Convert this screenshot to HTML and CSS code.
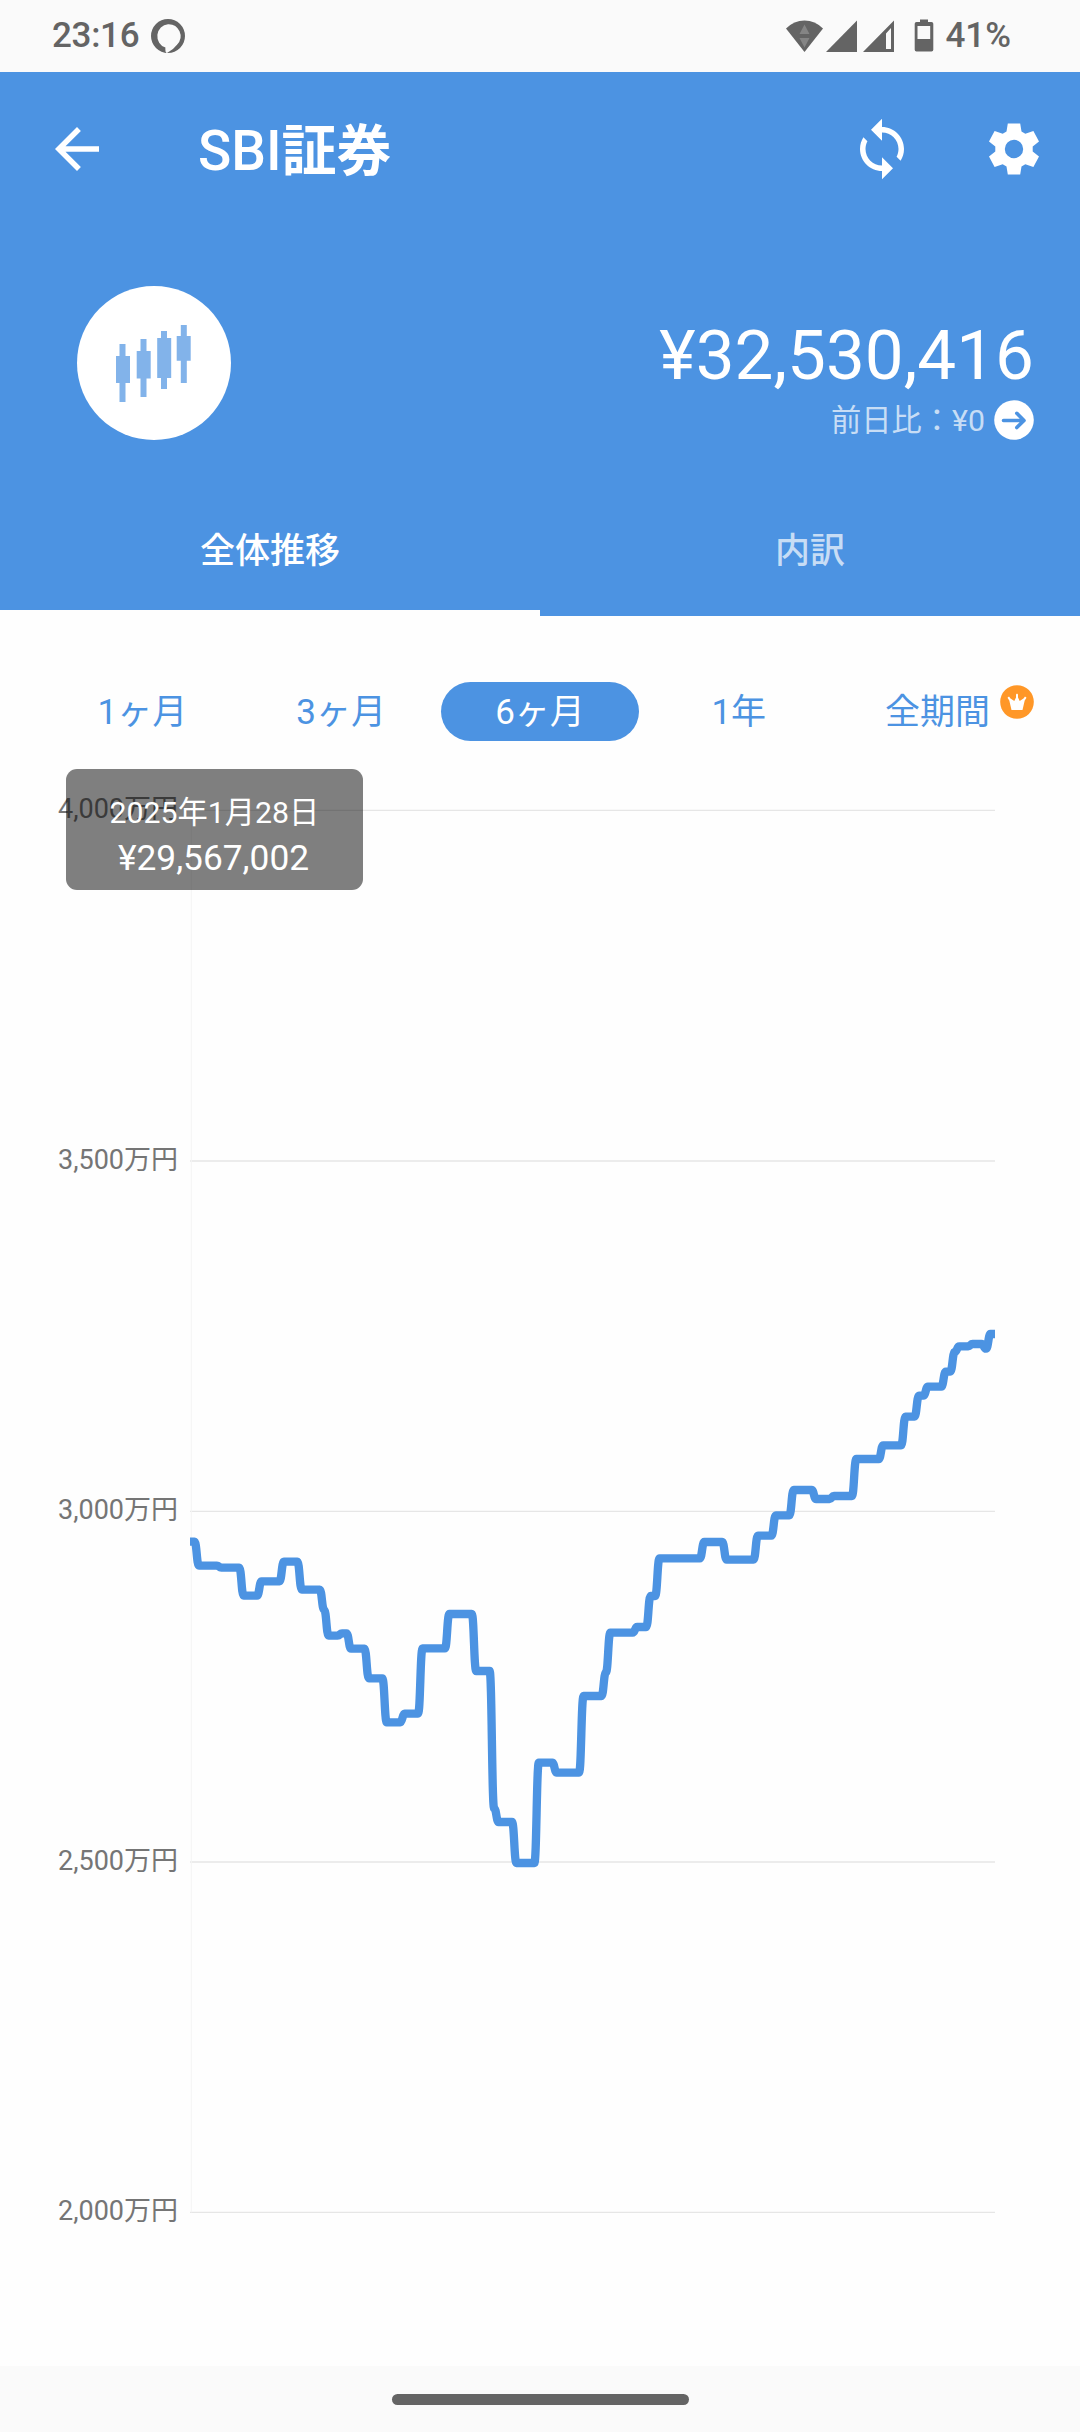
FILE: index.html
```html
<!DOCTYPE html>
<html lang="ja">
<head>
    <meta charset="UTF-8">
    <meta name="viewport" content="width=device-width, initial-scale=1.0">
    <title>SBI証券</title>
    <link rel="stylesheet" href="styles.css">
</head>
<body>
    <div class="status-bar">
        <span class="clock">23:16</span>
        <svg class="ring-icon" width="34" height="34" viewBox="0 0 34 34">
            <path fill-rule="evenodd" d="M17 0a17 17 0 1 1 0 34a17 17 0 1 1 0-34zM17 5.2a11.6 12 0 0 0-2.600 23.400l.6 4.800l1 .6q6.500-3.500 10-8.300A12 12 0 0 0 17 5.200z"/>
            <path class="ring-gap" d="M14.600 29.200L14.600 33L22 27.600L17 29.300z"/>
        </svg>
        <div class="status-icons">
            <svg width="148" height="34" viewBox="0 0 148 34">
                <path d="M0 9.500Q8 1.500 18.500 1.500T37 9.500L18.500 33z"/>
                <path class="wifi-arrow" d="M18.500 5.500l5 9.500h-10zM13.500 19h10l-5 9.500z"/>
                <path d="M71 1.500V33H40z"/>
                <path fill-rule="evenodd" d="M108 1.500V33H77zM105 9l-5 5.500V30h5z"/>
                <path fill-rule="evenodd" d="M134 .5h8V3h3.500q1.800 0 1.800 1.800v26q0 1.800-1.800 1.800h-15q-1.800 0-1.800-1.800v-26Q128.700 3 130.500 3h3.500zM131.500 7v13h12.700V7z"/>
            </svg>
            <span class="battery">41%</span>
        </div>
    </div>

    <header class="header">
        <div class="toolbar">
            <svg class="icon back-icon" viewBox="0 0 24 24"><path d="M20 11H7.830l5.590-5.590L12 4l-8 8 8 8 1.410-1.410L7.830 13H20v-2z"/></svg>
            <h1 class="title">SBI<b>証券</b></h1>
            <svg class="icon" viewBox="0 0 24 24"><path d="M12 4V1L8 5l4 4V6c3.310 0 6 2.690 6 6 0 1.010-.25 1.970-.7 2.800l1.460 1.460C19.540 15.030 20 13.570 20 12c0-4.420-3.580-8-8-8zm0 14c-3.310 0-6-2.690-6-6 0-1.010.25-1.970.7-2.800L5.240 7.740C4.460 8.970 4 10.430 4 12c0 4.420 3.580 8 8 8v3l4-4-4-4v3z"/></svg>
            <svg class="icon" viewBox="-33 -33 66 66"><path fill-rule="evenodd" d="M-6.200-25.500H6.200L7.500-17.500L11.300-15.200L19.400-18L25-7.400L18.700-2.500V2.500L25 7.600L19.400 18L11.300 15.200L7.500 17.500L6.200 25.500H-6.200L-7.500 17.500L-11.300 15.200L-19.400 18L-25 7.600L-18.700 2.500V-2.500L-25-7.400L-19.400-18L-11.300-15.200L-7.500-17.500zM0-9.200a9.200 9.200 0 1 0 0 18.400a9.200 9.200 0 1 0 0-18.400z"/></svg>
        </div>

        <div class="summary">
            <div class="avatar">
                <svg width="154" height="154" viewBox="0 0 154 154">
                    <path d="M42.500 58h6v58h-6zM39 70h14v27H39z"/>
                    <path d="M63.500 53h6v58h-6zM59.700 65h14v27.500h-14z"/>
                    <path d="M84 45h6v58h-6zM80.200 52h14v40h-14z"/>
                    <path d="M103.800 39h6v58h-6zM99.700 50h14v24.700h-14z"/>
                </svg>
            </div>
            <div class="balance">
                <div class="amount">¥32,530,416</div>
                <div class="change">
                    <span>前日比：¥0</span>
                    <svg width="40" height="40" viewBox="0 0 40 40">
                        <circle cx="20" cy="20" r="19.800"/>
                        <path d="M9.500 20.500H30M22.800 13.300L30 20.500L22.800 27.500"/>
                    </svg>
                </div>
            </div>
        </div>

        <div class="tabs">
            <div class="tab active">全体推移</div>
            <div class="tab">内訳</div>
        </div>
    </header>

    <main class="content">
        <div class="periods">
            <div class="period">1ヶ月</div>
            <div class="period">3ヶ月</div>
            <div class="period selected">6ヶ月</div>
            <div class="period">1年</div>
            <div class="period">全期間
                <svg class="premium" width="34" height="34" viewBox="0 0 34 34">
                    <circle cx="17" cy="17" r="16.800"/>
                    <path d="M11.500 25L9.300 15.500L7.500 12.800L9 11.500L10.500 13.500L14.300 16L16 12.500L16 9.500L17 8.500L18 9.500L18 12.500L19.700 16L23.500 13.500L25 11.500L26.500 12.800L24.700 15.500L22.500 25z"/>
                </svg>
            </div>
        </div>

        <div class="chart">
            <div class="y-axis">
                <span>4,000万円</span>
                <span>3,500万円</span>
                <span>3,000万円</span>
                <span>2,500万円</span>
                <span>2,000万円</span>
            </div>
            <svg class="plot" width="805" height="1422" viewBox="0 0 2415 4266">
                <path class="grid" d="M0 31H2415M0 1083H2415M0 2134H2415M0 3186H2415M0 4237H2415"/>
                <path class="axis" d="M4 31V4237"/>
                <path class="series" id="series"/>
            </svg>
            <div class="tooltip">
                <div class="tooltip-date">2025年1月28日</div>
                <div class="tooltip-value">¥29,567,002</div>
            </div>
        </div>
    </main>

    <div class="nav-bar"><div class="handle"></div></div>

    <script>
        // [day, y] where the balance changes
        const points = [
            [0, 2225], [1, 2225], [2, 2297], [6, 2297], [7, 2303], [11, 2303], [12, 2387], [15, 2387],
            [16, 2344], [20, 2344], [21, 2285], [24, 2285], [25, 2369], [29, 2369], [30, 2430], [31, 2507],
            [33, 2507], [34, 2500], [35, 2500], [36, 2546], [39, 2546], [40, 2635], [43, 2635], [44, 2767],
            [47, 2767], [48, 2741], [51, 2741], [52, 2545], [57, 2545], [58, 2442], [63, 2442], [64, 2613],
            [67, 2613], [68, 3025], [69, 3066], [72, 3066], [73, 3189], [77, 3189], [78, 2888], [81, 2888],
            [82, 2918], [87, 2918], [88, 2688], [92, 2688], [93, 2617], [94, 2498], [99, 2498], [100, 2481],
            [102, 2481], [103, 2388], [104, 2388], [105, 2275], [114, 2275], [115, 2226], [119, 2226],
            [120, 2279], [126, 2279], [127, 2207], [130, 2207], [131, 2146], [134, 2146], [135, 2070],
            [139, 2070], [140, 2097], [143, 2097], [144, 2088], [148, 2088], [149, 1977], [154, 1977],
            [155, 1936], [159, 1936], [160, 1850], [162, 1850], [163, 1787], [164, 1787], [165, 1760],
            [168, 1760], [169, 1715], [170, 1715], [171, 1656], [172, 1639], [174, 1639], [175, 1632],
            [177, 1632], [178, 1646], [179, 1602], [180, 1602]
        ];
        const step = 2415 / 180;

        let d = "M0 " + points[0][1];
        for (let i = 1; i < points.length; i++) {
            const x1 = points[i - 1][0] * step;
            const x2 = points[i][0] * step;
            const mid = (x1 + x2) / 2;
            d += ` C${mid} ${points[i - 1][1]} ${mid} ${points[i][1]} ${x2} ${points[i][1]}`;
        }
        document.getElementById('series').setAttribute('d', d);
    </script>
</body>
</html>
```

FILE: styles.css
```css
* {
    box-sizing: border-box;
}
body {
    margin: 0;
    width: 1080px;
    height: 2432px;
    display: flex;
    flex-direction: column;
    background-color: #fefefe;
    font-family: Roboto, "Noto Sans CJK JP", sans-serif;
}
svg {
    display: block;
    flex: none;
}

/* status bar */
.status-bar {
    height: 72px;
    padding: 0 69px 0 52px;
    display: flex;
    align-items: center;
    background-color: #fafafa;
    color: #646464;
    fill: #646464;
    font-size: 35px;
    font-weight: 500;
    line-height: 71px;
}
.clock {
    width: 99px;
    height: 72px;
    letter-spacing: -0.3px;
}
.status-icons {
    display: flex;
    align-items: center;
    gap: 11px;
    height: 72px;
    margin-left: auto;
}
.ring-gap {
    fill: #fafafa;
}
.battery {
    height: 72px;
}
.wifi-arrow {
    fill: #858585;
}

/* header */
.header {
    height: 544px;
    display: flex;
    flex-direction: column;
    background-color: #4c93e2;
    color: #ffffff;
}
.toolbar {
    height: 154px;
    padding: 0 33px 0 44px;
    display: flex;
    align-items: center;
}
.icon {
    width: 66px;
    height: 66px;
    fill: #ffffff;
    margin-left: 66px;
}
.back-icon {
    margin-left: 0;
}
.title {
    flex: 1;
    margin: 4px 0 0 88px;
    font-size: 55px;
    font-weight: 500;
    line-height: 80px;
}
.title b {
    font-weight: 700;
}
.summary {
    height: 274px;
    padding: 60px 46px 0 77px;
    display: flex;
    justify-content: space-between;
    align-items: flex-start;
}
.avatar {
    width: 154px;
    height: 154px;
    border-radius: 50%;
    background-color: #ffffff;
    fill: #82b3ea;
}
.balance {
    padding-top: 29px;
}
.amount {
    font-size: 69.2px;
    line-height: 82px;
    text-align: right;
}
.change {
    height: 40px;
    margin-top: 3px;
    display: flex;
    justify-content: flex-end;
    align-items: center;
    gap: 9px;
    font-size: 30.25px;
    line-height: 40px;
}
.change span {
    height: 39px;
    color: rgba(255, 255, 255, 0.7);
}
.change circle {
    fill: #ffffff;
}
.change path {
    fill: none;
    stroke: #4c93e2;
    stroke-width: 3.6;
    stroke-linecap: round;
    stroke-linejoin: round;
}
.tabs {
    flex: 1;
    display: flex;
}
.tab {
    flex: 1;
    padding-top: 27px;
    text-align: center;
    font-size: 35px;
    font-weight: 500;
    line-height: 50px;
    color: rgba(255, 255, 255, 0.7);
}
.tab.active {
    color: #ffffff;
    border-bottom: 6px solid #fefefe;
}

/* content */
.content {
    flex: 1;
    padding-top: 66px;
}
.periods {
    display: grid;
    grid-template-columns: repeat(5, 1fr);
    padding: 0 43px;
}
.period {
    position: relative;
    height: 59px;
    border-radius: 30px;
    text-align: center;
    font-size: 35px;
    line-height: 62px;
    color: #4c93e2;
}
.period.selected {
    background-color: #4c93e2;
    color: #ffffff;
}
.premium {
    position: absolute;
    top: 3px;
    right: 3px;
    fill: #ffffff;
}
.premium circle {
    fill: #ff9727;
}
.chart {
    position: relative;
    margin-top: 52px;
    display: flex;
    align-items: flex-start;
}
.y-axis {
    width: 190px;
    height: 1434px;
    padding-right: 12px;
    display: flex;
    flex-direction: column;
    justify-content: space-between;
    text-align: right;
    font-size: 27px;
    line-height: 33px;
    color: #757575;
}
.y-axis span {
    height: 32px;
}
.plot {
    margin-top: 7px;
    fill: none;
}
.grid {
    stroke: #e6e6e6;
    stroke-width: 4;
}
.axis {
    stroke: #f4f4f4;
    stroke-width: 3;
}
.series {
    stroke: #4c93e2;
    stroke-width: 25;
    stroke-linejoin: round;
}
.tooltip {
    position: absolute;
    left: 66px;
    top: -24px;
    width: 297px;
    height: 121px;
    padding-top: 23px;
    border-radius: 11px;
    background-color: rgba(0, 0, 0, 0.5);
    color: #ffffff;
    text-align: center;
}
.tooltip-date {
    font-size: 30.25px;
    line-height: 42px;
}
.tooltip-value {
    margin-left: -2px;
    font-size: 35.3px;
    line-height: 48px;
}

/* gesture navigation */
.nav-bar {
    height: 66px;
    display: flex;
    justify-content: center;
    align-items: center;
    background-color: #fafafa;
}
.handle {
    width: 297px;
    height: 11px;
    border-radius: 6px;
    background-color: #646464;
}
```
